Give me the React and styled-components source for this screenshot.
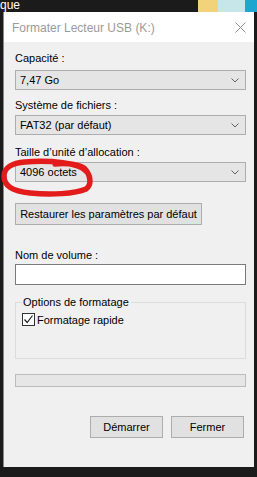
import styled, { createGlobalStyle } from "styled-components";

const Global = createGlobalStyle`
  html, body {
    margin: 0;
    padding: 0;
    background: #1b1b1b;
  }
  body {
    font-family: "Segoe UI", "Liberation Sans", Arial, sans-serif;
    font-size: 11px;
    overflow: hidden;
  }
`;

const Desktop = styled.div`
  width: 257px;
  height: 477px;
  display: flex;
  flex-direction: column;
  background: #1b1b1b;
  position: relative;
`;

const TopStrip = styled.div`
  height: 12px;
  display: flex;
  align-items: stretch;
`;

const TaskText = styled.div`
  color: #fff;
  font-size: 12px;
  line-height: 11px;
  height: 12px;
`;

const Spacer = styled.div`
  flex: 1;
`;

const Patch = styled.div`
  width: ${(p) => p.w}px;
  background: ${(p) => p.color};
`;

const Middle = styled.div`
  display: flex;
  padding-left: 3px;
`;

const Window = styled.div`
  width: 251px;
  height: 455px;
  background: #f0f0f0;
  border-left: 1px solid #8a8a8a;
  box-sizing: border-box;
  display: flex;
  flex-direction: column;
`;

const TitleBar = styled.div`
  height: 30px;
  background: #fff;
  display: flex;
  align-items: center;
  justify-content: space-between;
  padding: 0 8px 0 8px;
`;

const Title = styled.div`
  color: #9a9a9a;
  font-size: 12px;
  padding-top: 2px;
`;

const Body = styled.div`
  display: flex;
  flex-direction: column;
  padding: 0 8px 0 11px;
  white-space: nowrap;
`;

const Label = styled.div`
  margin-top: ${(p) => p.top}px;
  height: 15px;
  line-height: 15px;
  color: #000;
`;

const Select = styled.div`
  margin-top: ${(p) => p.top}px;
  height: 20px;
  box-sizing: border-box;
  border: 1px solid #adadad;
  background: #e5e5e5;
  display: flex;
  align-items: center;
  justify-content: space-between;
  padding: 0 6px 0 4px;
  color: #000;
`;

const Button = styled.div`
  margin-top: ${(p) => p.top}px;
  height: 22px;
  box-sizing: border-box;
  border: 1px solid #adadad;
  background: #e1e1e1;
  display: flex;
  align-items: center;
  justify-content: center;
  width: ${(p) => p.w}px;
  color: #000;
`;

const Input = styled.div`
  margin-top: ${(p) => p.top}px;
  height: 21px;
  box-sizing: border-box;
  border: 1px solid #7a7a7a;
  background: #fff;
`;

const Group = styled.fieldset`
  margin: 11px 0 0 0;
  padding: 0 0 0 6px;
  height: 63px;
  box-sizing: border-box;
  border: 1px solid #dcdcdc;
  min-width: 0;
`;

const Legend = styled.legend`
  padding: 0 2px 0 1px;
  color: #000;
  line-height: 13px;
`;

const CheckRow = styled.label`
  display: flex;
  align-items: center;
  gap: 2px;
  margin-top: 4px;
  color: #000;
`;

const Box = styled.span`
  width: 13px;
  height: 13px;
  box-sizing: border-box;
  border: 1px solid #333;
  background: #fff;
  display: flex;
  align-items: center;
  justify-content: center;
`;

const Progress = styled.div`
  margin-top: 15px;
  height: 13px;
  box-sizing: border-box;
  border: 1px solid #bcbcbc;
  background: #e6e6e6;
`;

const Footer = styled.div`
  margin-top: 29px;
  display: flex;
  justify-content: flex-end;
  gap: 8px;
  padding-right: 2px;
`;

const Annotation = styled.svg`
  position: absolute;
  left: 0;
  top: 155px;
  pointer-events: none;
`;

const Chevron = () => (
  <svg width="8" height="5" viewBox="0 0 8 5">
    <path d="M0.5 0.5 L4 4 L7.5 0.5" fill="none" stroke="#606060" strokeWidth="1" />
  </svg>
);

export default function App() {
  return (
    <>
      <Global />
      <Desktop>
        <TopStrip>
          <TaskText>que</TaskText>
          <Spacer />
          <Patch w={20} color="#f2d27a" />
          <Patch w={27} color="#c6e6ea" />
          <Patch w={12} color="#1fa6cf" />
        </TopStrip>
        <Middle>
          <Window>
            <TitleBar>
              <Title>Formater Lecteur USB (K:)</Title>
              <svg width="11" height="11" viewBox="0 0 11 11">
                <path d="M0.5 0.5 L10.5 10.5 M10.5 0.5 L0.5 10.5" stroke="#8c8c8c" strokeWidth="1" />
              </svg>
            </TitleBar>
            <Body>
              <Label top={9}>Capacité :</Label>
              <Select top={4}>
                <span>7,47 Go</span>
                <Chevron />
              </Select>
              <Label top={8}>Système de fichiers :</Label>
              <Select top={2}>
                <span>FAT32 (par défaut)</span>
                <Chevron />
              </Select>
              <Label top={10}>Taille d’unité d’allocation :</Label>
              <Select top={2}>
                <span>4096 octets</span>
                <Chevron />
              </Select>
              <Button top={21} w={187}>Restaurer les paramètres par défaut</Button>
              <Label top={23}>Nom de volume :</Label>
              <Input top={1} />
              <Group>
                <Legend>Options de formatage</Legend>
                <CheckRow>
                  <Box>
                    <svg width="11" height="11" viewBox="0 0 11 11">
                      <path d="M1.5 5.5 L4.2 8.5 L9.5 1.5" fill="none" stroke="#222" strokeWidth="1.2" />
                    </svg>
                  </Box>
                  Formatage rapide
                </CheckRow>
              </Group>
              <Progress />
              <Footer>
                <Button top={0} w={73}>Démarrer</Button>
                <Button top={0} w={73}>Fermer</Button>
              </Footer>
            </Body>
          </Window>
        </Middle>
        <Annotation width="100" height="45" viewBox="0 155 100 45">
          <path
            d="M86 171 C80 163, 50 160, 25 162 C12 163, 4 168, 4 176 C4 186, 12 191, 30 193 C50 195, 75 194, 86 189 C92 185, 91 175, 84 168 C76 163, 62 163, 55 164"
            fill="none"
            stroke="#e31b1b"
            strokeWidth="5.5"
            strokeLinecap="round"
          />
        </Annotation>
      </Desktop>
    </>
  );
}
